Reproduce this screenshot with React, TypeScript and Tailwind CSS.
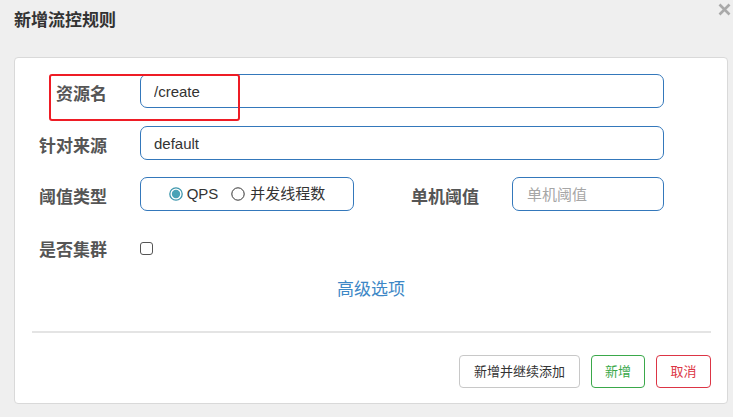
import React from "react";

function Radio({ checked }: { checked: boolean }) {
  return (
    <svg width="14" height="14" viewBox="0 0 14 14" className="shrink-0">
      {checked ? (
        <>
          <circle cx="7" cy="7" r="6.2" fill="#fff" stroke="#3f97ad" strokeWidth="1.3" />
          <circle cx="7" cy="7" r="4.2" fill="#4aa3b6" />
        </>
      ) : (
        <circle cx="7" cy="7" r="6.2" fill="#fff" stroke="#333" strokeWidth="1" />
      )}
    </svg>
  );
}

export default function App() {
  return (
    <div className="w-[733px] h-[417px] bg-[#efefef] font-['Liberation_Sans','Noto_Sans_CJK_SC',sans-serif] flex flex-col overflow-hidden">
      <div className="h-[57px] flex items-start justify-between pl-[14px] pr-[2px]">
        <div className="mt-[12px] text-[17px] leading-[17px] font-bold text-[#333]">新增流控规则</div>
        <svg width="13" height="13" viewBox="0 0 13 13" className="mt-[3px]">
          <path d="M1.5 1.5 L11.5 11.5 M11.5 1.5 L1.5 11.5" stroke="#a9a9a9" strokeWidth="2.6" strokeLinecap="butt" />
        </svg>
      </div>
      <div className="relative ml-[14px] w-[714px] h-[347px] bg-white border border-[#d9d9d9] rounded-[4px] pt-[16px] flex flex-col">
        {/* row 1 */}
        <div className="flex items-center h-[34px]">
          <div className="mt-[7px] w-[92px] text-right text-[17px] font-bold text-[#555]">资源名</div>
          <input
            readOnly
            defaultValue="/create"
            className="ml-[33px] w-[524px] h-[34px] border border-[#3478bb] rounded-[7px] px-[13px] text-[15px] text-[#333] outline-none"
          />
        </div>
        {/* row 2 */}
        <div className="flex items-center h-[34px] mt-[18px]">
          <div className="mt-[7px] w-[92px] text-right text-[17px] font-bold text-[#555]">针对来源</div>
          <input
            readOnly
            defaultValue="default"
            className="ml-[33px] w-[524px] h-[34px] border border-[#3478bb] rounded-[7px] px-[13px] text-[15px] text-[#333] outline-none"
          />
        </div>
        {/* row 3 */}
        <div className="flex items-center h-[34px] mt-[17px]">
          <div className="mt-[7px] w-[92px] text-right text-[17px] font-bold text-[#555]">阈值类型</div>
          <div className="ml-[33px] w-[214px] h-[34px] border border-[#3478bb] rounded-[7px] flex items-center justify-center text-[15px] text-[#333]">
            <Radio checked />
            <span className="ml-[4px]">QPS</span>
            <span className="ml-[13px]"><Radio checked={false} /></span>
            <span className="ml-[5px]">并发线程数</span>
          </div>
          <div className="mt-[7px] w-[125px] text-right text-[17px] font-bold text-[#555]">单机阈值</div>
          <input
            readOnly
            placeholder="单机阈值"
            className="ml-[33px] w-[152px] h-[34px] border border-[#3478bb] rounded-[7px] px-[14px] text-[15px] text-[#333] placeholder:text-[#a6a6a6] outline-none"
          />
        </div>
        {/* row 4 */}
        <div className="flex items-center h-[34px] mt-[20px]">
          <div className="mt-[6px] w-[92px] text-right text-[17px] font-bold text-[#555]">是否集群</div>
          <div className="ml-[33px] w-[13px] h-[13px] border border-[#555] rounded-[3px] bg-white" />
        </div>
        {/* advanced */}
        <div className="mt-[13px] h-[24px] flex items-center justify-center text-[17px] text-[#3d87c6]">高级选项</div>
        {/* divider */}
        <div className="mt-[29px] ml-[17px] w-[679px] h-[2px] bg-[#e4e4e4]" />
        {/* buttons */}
        <div className="mt-[22px] flex justify-end pr-[16px] gap-[11px]">
          <div className="w-[121px] h-[33px] border border-[#c8c8c8] rounded-[4px] flex items-center justify-center text-[13px] text-[#333]">新增并继续添加</div>
          <div className="w-[54px] h-[33px] border border-[#3aa84a] rounded-[4px] flex items-center justify-center text-[13px] text-[#3aa84a]">新增</div>
          <div className="w-[55px] h-[33px] border border-[#dc3545] rounded-[4px] flex items-center justify-center text-[13px] text-[#dc3545]">取消</div>
        </div>
        {/* annotation box */}
        <div className="absolute left-[34px] top-[16px] w-[191px] h-[47px] border-2 border-[#ee1c25] rounded-[3px] pointer-events-none" />
      </div>
    </div>
  );
}
